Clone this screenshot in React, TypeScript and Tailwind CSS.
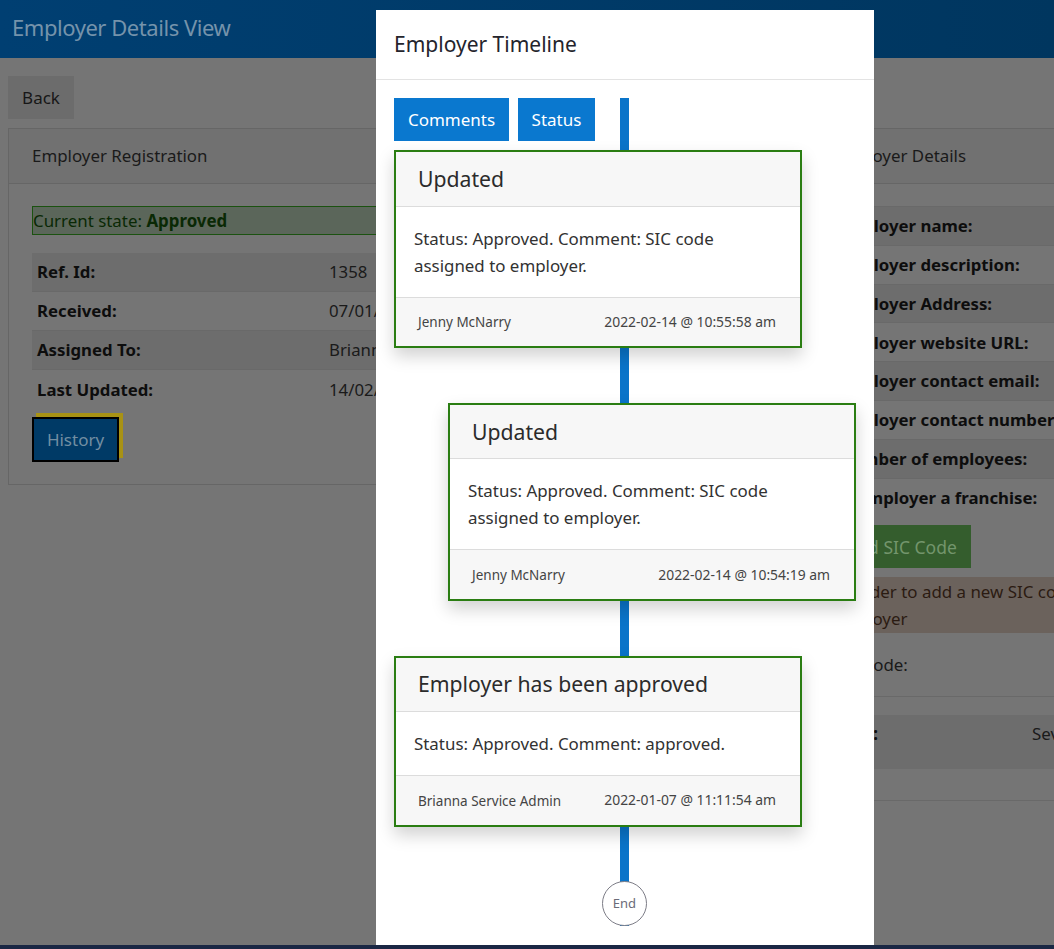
const leftRows = [
  { label: "Ref. Id:", value: "1358" },
  { label: "Received:", value: "07/01/2022" },
  { label: "Assigned To:", value: "Brianna Service Admin" },
  { label: "Last Updated:", value: "14/02/2022" },
];

const rightRows = [
  "Employer name:",
  "Employer description:",
  "Employer Address:",
  "Employer website URL:",
  "Employer contact email:",
  "Employer contact number:",
  "Number of employees:",
  "Is employer a franchise:",
];

const events = [
  {
    title: "Updated",
    body: "Status: Approved. Comment: SIC code assigned to employer.",
    user: "Jenny McNarry",
    time: "2022-02-14 @ 10:55:58 am",
    shifted: false,
  },
  {
    title: "Updated",
    body: "Status: Approved. Comment: SIC code assigned to employer.",
    user: "Jenny McNarry",
    time: "2022-02-14 @ 10:54:19 am",
    shifted: true,
  },
  {
    title: "Employer has been approved",
    body: "Status: Approved. Comment: approved.",
    user: "Brianna Service Admin",
    time: "2022-01-07 @ 11:11:54 am",
    shifted: false,
  },
];

function DetailRow({ label, value, odd, tall }: { label: string; value?: string; odd: boolean; tall?: boolean }) {
  return (
    <div className={`flex items-center border-b border-[#696969] text-[16.8px] last:border-b-0 ${tall ? "h-[39px]" : "h-[38.8px]"} ${odd ? "bg-[#6d6d6d]" : ""}`}>
      <div className="w-[297px] shrink-0 pl-[5px] font-bold text-[#0d0d0d]">{label}</div>
      <div className="whitespace-nowrap text-[#1a1a1a]">{value}</div>
    </div>
  );
}

function TimelineCard({ title, body, user, time, shifted }: (typeof events)[number]) {
  return (
    <div className={`relative w-[408px] border-2 border-[#2a7d12] bg-white shadow-[0_8px_16px_rgba(0,0,0,0.18)] ${shifted ? "ml-[54px]" : ""}`}>
      <div className="flex h-[54.5px] items-center border-b border-[#dcdcdc] bg-[#f7f7f7] pl-[22px] text-[21.2px] text-[#2b2b2b]">{title}</div>
      <div className="border-b border-[#dcdcdc] px-[18px] py-[18px] text-[16.9px] leading-[27px] text-[#323232]">{body}</div>
      <div className="flex h-[48.5px] items-center justify-between bg-[#f7f7f7] pl-[22px] pr-[24px] pt-[1px] text-[13.5px] text-[#444444]">
        <span>{user}</span>
        <span className="text-[13.9px]">{time}</span>
      </div>
    </div>
  );
}

export default function App() {
  return (
    <div className="relative h-[949px] w-[1054px] overflow-hidden bg-[#757575] font-['Noto_Sans',sans-serif]">
      <header className="flex h-[58px] w-full items-center bg-gradient-to-r from-[#003f72] to-[#00365f] pb-1 pl-3 text-[22px] tracking-[-0.45px] text-[#7593ab]">
        Employer Details View
      </header>

      <div className="w-[1606px] px-2 pt-[18px]">
        <button className="flex h-[43px] w-[66px] items-center justify-center bg-[#6c6c6c] text-[17px] text-[#171717]">Back</button>

        <div className="mt-[9px] flex gap-[10.5px]">
          <section className="h-[357px] w-[791px] shrink-0 border border-[#666666]">
            <div className="flex h-[55px] items-center border-b border-[#666666] bg-[#717171] pl-[23px] text-[16.9px] text-[#1a1a1a]">Employer Registration</div>
            <div className="px-[23px] pt-[22px]">
              <div className="flex h-[29px] items-center border border-[#1b5210] bg-[#5b665a] text-[16.9px] text-[#0a2905]">
                Current state:&nbsp;<b className="text-[#0a2905]">Approved</b>
              </div>
              <div className="mt-[18px]">
                {leftRows.map((row, i) => (
                  <DetailRow key={row.label} label={row.label} value={row.value} odd={i % 2 === 0} tall />
                ))}
              </div>
              <button className="mt-2 flex h-[45px] w-[87px] items-center justify-center border-2 border-black bg-[#003a66] text-[17px] text-[#728ea2] shadow-[4px_-4px_0_#a89214]">
                History
              </button>
            </div>
          </section>

          <section className="w-[791px] shrink-0 border-t border-[#666666]">
            <div className="flex h-[55px] items-center border-b border-[#666666] bg-[#717171] pl-[23px] text-[16.9px] text-[#1a1a1a]">Employer Details</div>
            <div className="px-[23px] pt-[22px]">
              <div className="border-t border-[#696969]">
                {rightRows.map((label, i) => (
                  <DetailRow key={label} label={label} odd={i % 2 === 0} />
                ))}
              </div>
              <button className="mt-[8px] flex h-[43px] w-[138px] items-center justify-center bg-[#345d2d] text-[17.5px] text-[#73956c]">Add SIC Code</button>
              <div className="mt-[9px] h-[56px] bg-[#6b625c] pt-[1px] text-[16.9px] leading-[27px] text-[#2b1b12]">
                In order to add a new SIC code, please verify the
                <br />
                Employer
              </div>
              <div className="flex h-[63.5px] items-center border-b border-[#696969] text-[16.9px] text-[#1a1a1a]">SIC Code:</div>
              <div className="mt-[18px] flex h-[54px] bg-[#6d6d6d] pt-[6px] text-[16.9px]">
                <div className="w-[199.5px] pl-[8px] font-bold text-[#0d0d0d]">Size:</div>
                <div className="text-[#1a1a1a]">Seven</div>
              </div>
              <div className="h-[32px] border-b border-[#696969]" />
            </div>
          </section>
        </div>
      </div>

      <div className="absolute inset-x-0 bottom-0 h-[4px] bg-[#1a2744]" />

      <div className="absolute left-[376px] top-[10px] h-[935px] w-[498px] bg-white">
        <div className="flex h-[70px] items-center border-b border-[#e3e3e3] pl-[18px] pt-[1px] text-[21px] text-[#24242c]">Employer Timeline</div>
        <div className="relative mx-[18px] mt-[18px]">
          <div className="absolute bottom-0 left-[226px] top-0 w-[9px] bg-[#0a74c9]" />
          <div className="relative flex gap-[9px]">
            <button className="h-[43px] w-[115px] bg-[#0a78cf] text-[17px] text-white">Comments</button>
            <button className="h-[43px] w-[77px] bg-[#0a78cf] text-[17px] text-white">Status</button>
          </div>
          <div className="mt-[9px] flex flex-col gap-[54.8px]">
            {events.map((event) => (
              <TimelineCard key={event.time} {...event} />
            ))}
          </div>
          <div className="relative ml-[208px] mt-[54.4px] flex h-[45px] w-[45px] items-center justify-center rounded-full border border-[#7c7c86] bg-white text-[13px] text-[#6b6b78]">
            End
          </div>
        </div>
      </div>
    </div>
  );
}
